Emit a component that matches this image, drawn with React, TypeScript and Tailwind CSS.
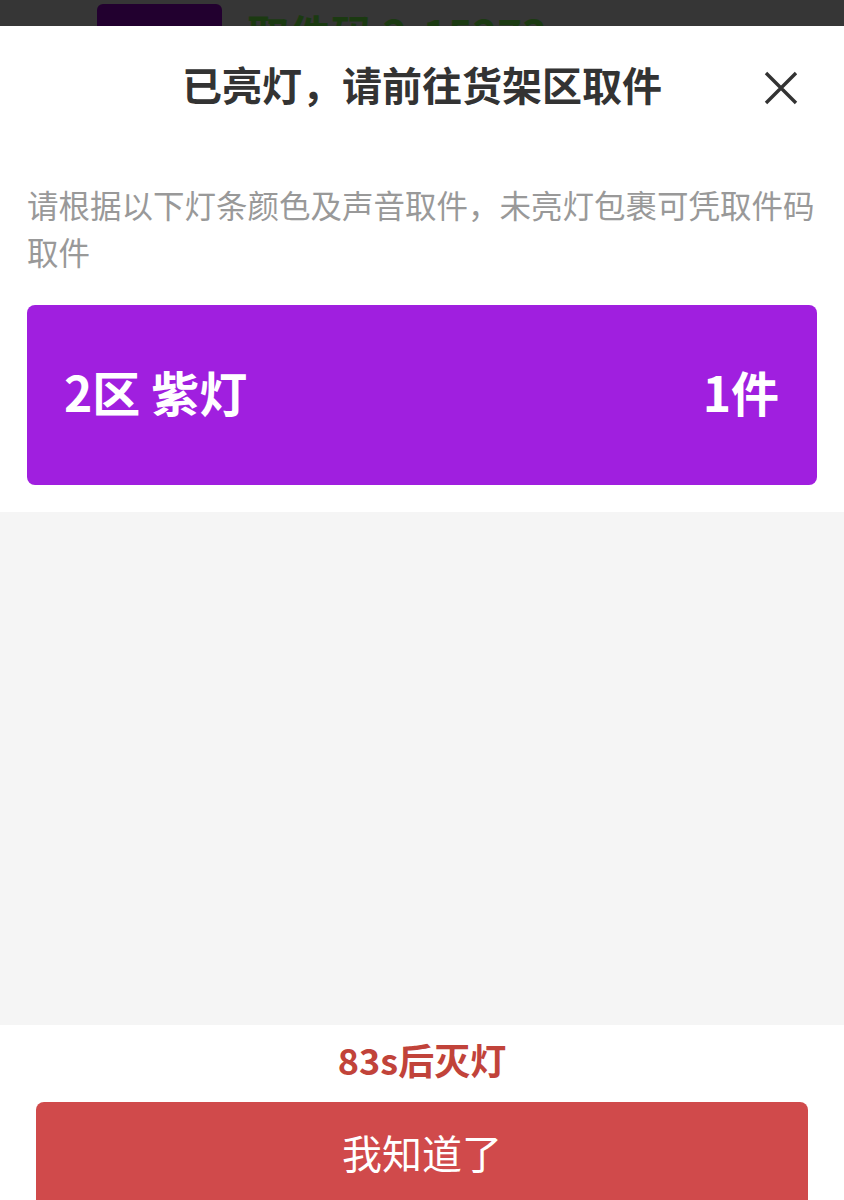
import React from "react";

function CloseIcon() {
  return (
    <svg width="34" height="34" viewBox="0 0 34 34" fill="none" xmlns="http://www.w3.org/2000/svg">
      <path d="M2 2L32 32M32 2L2 32" stroke="#333333" strokeWidth="3.4" />
    </svg>
  );
}

export default function App() {
  return (
    <div className="w-[844px] h-[1200px] overflow-hidden bg-[#363636] flex flex-col font-['Noto_Sans_CJK_SC','Noto_Sans',sans-serif]">
      {/* page behind the sheet */}
      <div className="h-[26px] shrink-0 overflow-hidden flex items-start pl-[97px] pt-[4px] gap-[25px]">
        <div className="w-[125px] h-[60px] shrink-0 rounded-[6px] bg-[#22002f]" />
        <div className="mt-[8px] text-[42px] leading-none font-bold text-[#1b3a11] whitespace-nowrap">取件码 2-15273</div>
      </div>

      <div className="flex-1 bg-white flex flex-col">
        <div className="h-[124px] shrink-0 grid grid-cols-[1fr_auto_1fr] items-center">
          <div />
          <div className="pb-[8px] text-[40px] font-bold text-[#333333] leading-none whitespace-nowrap">已亮灯，请前往货架区取件</div>
          <button className="justify-self-end mr-[46px] flex items-center justify-center">
            <CloseIcon />
          </button>
        </div>

        <div className="px-[27px] pt-[31px] text-[31.5px] leading-[47px] text-[#999999]">
          请根据以下灯条颜色及声音取件，未亮灯包裹可凭取件码取件
        </div>

        <div className="mx-[27px] mt-[30px] h-[180px] shrink-0 rounded-[8px] bg-[#a01fdf] flex items-center justify-between pl-[37px] pr-[38px] pb-[9px] text-white font-bold text-[48px] leading-none">
          <span>2区 紫灯</span>
          <span>1件</span>
        </div>

        <div className="mt-[27px] h-[513px] shrink-0 bg-[#f5f5f5]" />

        <div className="pt-[13px] pb-[22px] text-center text-[36px] leading-[42px] font-bold text-[#c1433a]">83s后灭灯</div>

        <button className="mx-[36px] h-[106px] shrink-0 rounded-[8px] bg-[#d04a4b] pb-[6px] text-white text-[40px] flex items-center justify-center">
          我知道了
        </button>
      </div>
    </div>
  );
}
